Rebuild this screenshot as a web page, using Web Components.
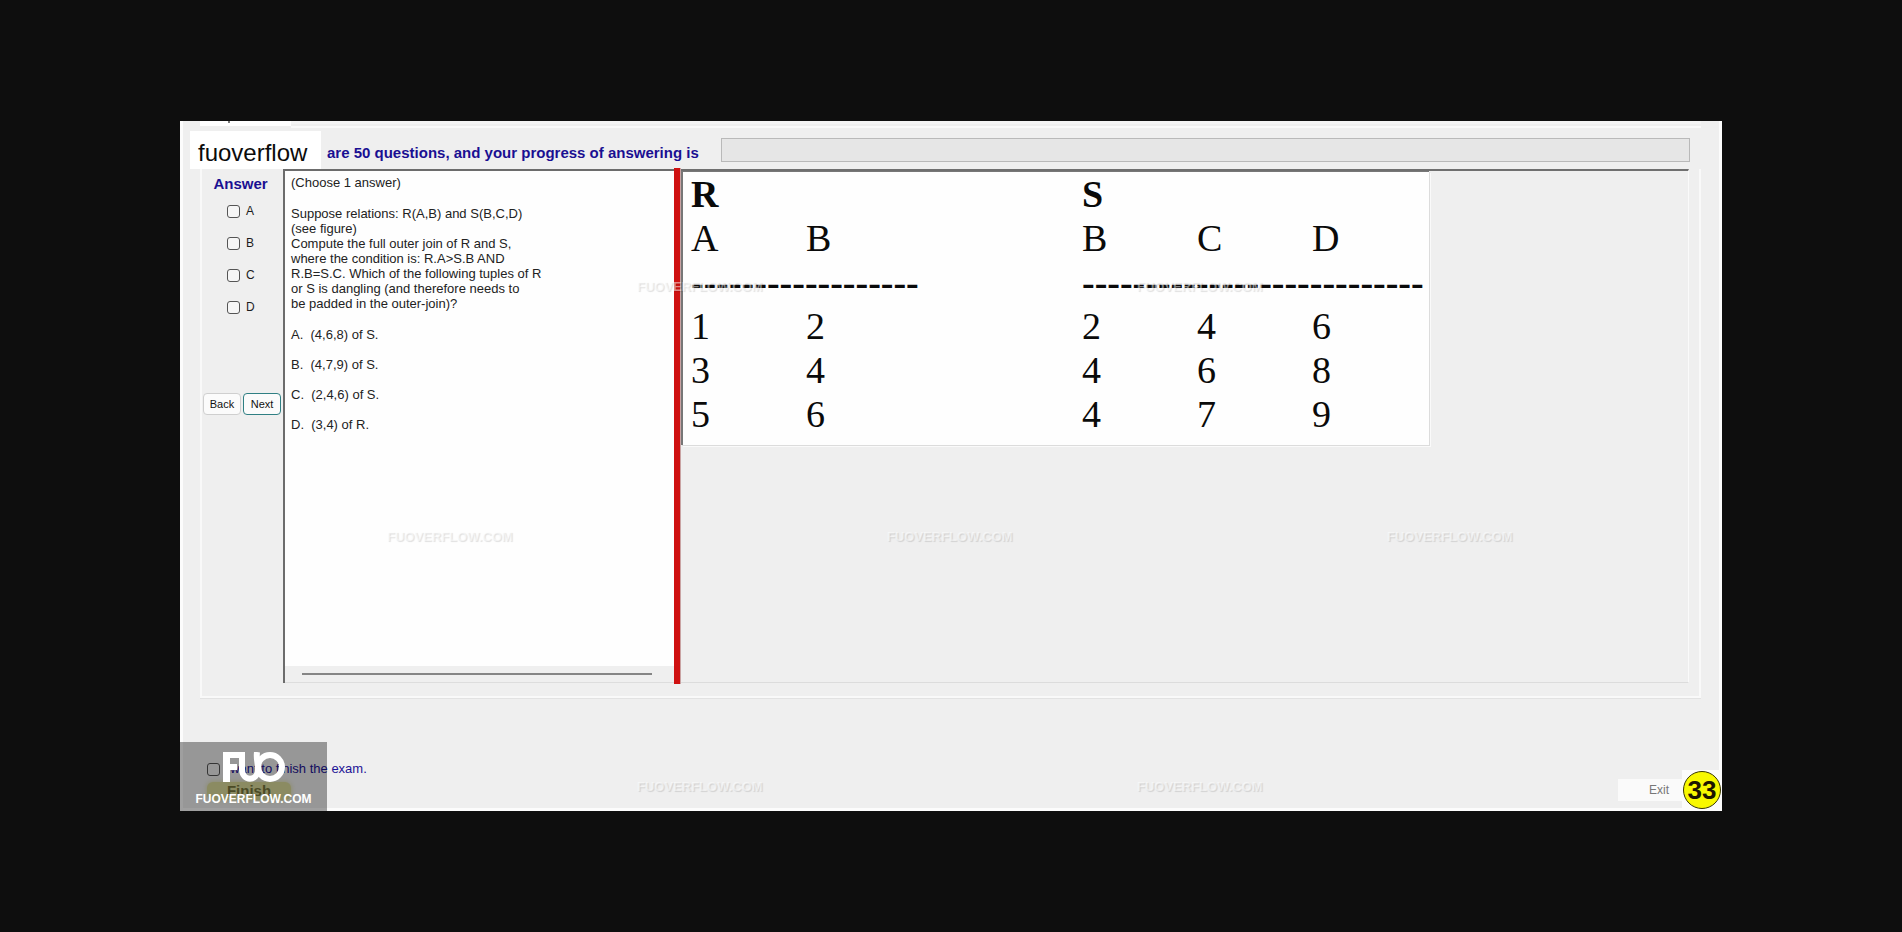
<!DOCTYPE html>
<html lang="en">
<head>
<meta charset="utf-8">
<title>Exam</title>
<style>
html,body{height:100%}
body{margin:0;background:#0e0e0e;font-family:"Liberation Sans",Arial,sans-serif;color:#1c1c1c}
</style>
</head>
<body>
<exam-app></exam-app>
<script>
function define(name, html, setup) {
  const template = document.createElement('template');
  template.innerHTML = html;
  customElements.define(name, class extends HTMLElement {
    constructor() {
      super();
      this.attachShadow({ mode: 'open' }).append(template.content.cloneNode(true));
    }
    connectedCallback() { if (setup) setup(this, this.shadowRoot); }
  });
}

/* Small square tick box with its caption */
define('tick-box', `
<style>
:host{display:block}
label{display:flex;align-items:center;gap:6px;font-size:12px;line-height:16px}
input{appearance:none;flex:none;width:13px;height:13px;margin:0;border:1px solid #555;border-radius:3px;background:#f6f6f6}
input:checked{background:#555}
:host([wide]) label{font-size:13px;gap:3px;color:#1d1396}
:host([wide]) input{background:none}
</style>
<label><input type="checkbox"><slot></slot></label>`);

define('exam-header', `
<style>
:host{display:block}
.strip{display:flex;height:7px;margin:0 21px 0 20px}
.tab{width:91px;height:5px;background:linear-gradient(#777,#777) 28px 0/2px 2px no-repeat #fff}
.line{flex:1;box-sizing:border-box;border-top:3px solid #f4f4f4;border-bottom:2px solid #fafafa}
.row{display:flex;align-items:flex-start;padding:3px 32px 0 10px}
.tag{width:131px;height:38px;box-sizing:border-box;padding:0 8px;background:#fff;color:#0b0b0b;font-size:24px;line-height:44px}
label{padding:12px 22px 0 6px;font-size:15px;line-height:20px;font-weight:700;color:#1a0f92;white-space:nowrap}
.bar{flex:1;height:24px;margin-top:7px;box-sizing:border-box;border:1px solid #b9b9b9;background:#e6e6e6}
</style>
<div class="strip"><div class="tab"></div><div class="line"></div></div>
<div class="row">
  <div class="tag">fuoverflow</div>
  <label id="progress">are 50 questions, and your progress of answering is</label>
  <div class="bar" role="progressbar" aria-labelledby="progress" aria-valuenow="0"></div>
</div>`);

define('answer-pane', `
<style>
:host{display:block;width:81px;text-align:center}
h2{margin:0;padding:5px 4px 9px 0;font-size:15px;line-height:20px;color:#1a0f92}
.choices{display:grid;gap:16px;padding:0 0 0 25px}
.nav{display:flex;gap:2px;padding:78px 0 0 1px}
button{box-sizing:border-box;width:38px;height:22px;padding:0;border:1px solid #cfcfcf;border-radius:4px;background:#fbfbfb;font:11px/18px "Liberation Sans",Arial,sans-serif;color:#111}
.next{border-color:#2f7f83}
</style>
<h2>Answer</h2>
<div class="choices">
  <tick-box>A</tick-box><tick-box>B</tick-box><tick-box>C</tick-box><tick-box>D</tick-box>
</div>
<div class="nav"><button type="button">Back</button><button type="button" class="next">Next</button></div>`);

define('question-pane', `
<style>
:host{display:flex;flex-direction:column;box-sizing:border-box;width:391px;border-left:2px solid #6c6c6c;border-top:2px solid #6c6c6c;background:#fefefe}
.text{flex:1;padding:4px 6px;font-size:13px;line-height:15px;color:#222}
p{margin:0 0 16px}
ol{display:grid;gap:15px;margin:0;padding:0;list-style:none}
.scroll{height:17px;padding:7px 22px 0 17px;box-sizing:border-box;background:#efefef;border-bottom:1px solid #ddd}
.thumb{height:2px;background:#858585}
</style>
<div class="text">
  <p>(Choose 1 answer)</p>
  <p>Suppose relations: R(A,B) and S(B,C,D)<br>(see figure)<br>Compute the full outer join of R and S,<br>where the condition is: R.A&gt;S.B AND<br>R.B=S.C. Which of the following tuples of R<br>or S is dangling (and therefore needs to<br>be padded in the outer-join)?</p>
  <ol><li>A.&nbsp; (4,6,8) of S.</li><li>B.&nbsp; (4,7,9) of S.</li><li>C.&nbsp; (2,4,6) of S.</li><li>D.&nbsp; (3,4) of R.</li></ol>
</div>
<div class="scroll"><div class="thumb"></div></div>`);

/* A relation: name, column heads, dashed rule, rows given as "1 2|3 4" */
define('relation-table', `
<style>
:host{display:block}
table{border-collapse:collapse;table-layout:fixed;font:38px/44px "Liberation Serif","Times New Roman",serif;color:#0a0a0a}
th,td{width:115px;height:44px;padding:0;text-align:left;font-weight:400;white-space:nowrap}
.name,.rule{font-weight:700}
</style>
<table></table>`, (host, root) => {
  const cols = host.getAttribute('columns').split(' ');
  const rows = host.getAttribute('rows').split('|').map(r => r.split(' '));
  root.querySelector('table').innerHTML =
    `<tr><th class="name" colspan="${cols.length}">${host.getAttribute('name')}</th></tr>` +
    `<tr>${cols.map(c => `<th>${c}</th>`).join('')}</tr>` +
    `<tr><td class="rule" colspan="${cols.length}">${'-'.repeat(+host.getAttribute('dashes'))}</td></tr>` +
    rows.map(r => `<tr>${r.map(c => `<td>${c}</td>`).join('')}</tr>`).join('');
});

define('figure-pane', `
<style>
:host{display:block;flex:1;box-sizing:border-box;border-top:2px solid #6f6f6f;border-right:1px solid #fafafa;border-bottom:1px solid #dcdcdc}
.figure{display:flex;box-sizing:border-box;width:748px;height:274px;padding:0 0 0 8px;border:solid #777;border-width:1px 0 0 2px;background:#fefefe;box-shadow:1px 1px #dcdcdc,2px 2px #fafafa}
.r{width:391px}
</style>
<div class="figure">
  <relation-table class="r" name="R" columns="A B" dashes="18" rows="1 2|3 4|5 6"></relation-table>
  <relation-table name="S" columns="B C D" dashes="27" rows="2 4 6|4 6 8|4 7 9"></relation-table>
</div>`);

define('exam-footer', `
<style>
:host{display:flex;justify-content:space-between;align-items:flex-start;padding:0 0 1px}
.finish{padding:20px 0 0 27px}
.finish button{display:block;width:84px;height:18px;margin:5px 0 0;padding:0;border:0;border-radius:6px;background:#dcdc9c;box-shadow:0 0 5px #dcdc9c;font:700 15px/18px "Liberation Sans",Arial,sans-serif;color:#77773c}
.end{display:flex;align-items:center;padding-top:29px}
.exit{width:82px;height:22px;margin-right:-18px;padding:0;border:0;background:#fafafa;font:12px/22px "Liberation Sans",Arial,sans-serif;color:#777}
.timer{display:grid;place-items:center;width:38px;height:38px;padding:1px;background:#fcfcfc;position:relative}
.timer b{box-sizing:border-box;width:38px;height:38px;border:1px solid #3a3800;border-radius:50%;background:#f8f800;font-size:26px;line-height:36px;text-align:center;color:#1d1600}
</style>
<div class="finish"><tick-box wide>I want to finish the exam.</tick-box><button type="button">Finish</button></div>
<div class="end"><button type="button" class="exit">Exit</button><div class="timer"><b>33</b></div></div>`);

/* Site badge in the corner */
define('site-badge', `
<style>
:host{display:grid;justify-items:center;align-content:start;gap:7px;box-sizing:border-box;width:147px;height:69px;padding-top:10px;background:rgba(0,0,0,.37);color:#fff}
.name{font-weight:700;font-size:12px;line-height:20px}
</style>
<svg width="62" height="30" viewBox="0 0 62 30" fill="none" stroke="#fff" stroke-width="6" role="img" aria-label="FUO">
  <rect x="0" y="0" width="7" height="30" fill="#fff" stroke="none"/>
  <rect x="0" y="0" width="16" height="6" fill="#fff" stroke="none"/>
  <rect x="0" y="12" width="14" height="6" fill="#fff" stroke="none"/>
  <path d="M19 0V17C19 30 35 30 35 17C35 10 33 7 34 0"/>
  <circle cx="47" cy="15" r="12"/>
</svg>
<div class="name">FUOVERFLOW.COM</div>`);

/* Faint repeated site name over the whole sheet */
define('water-marks', `
<style>
:host{display:block;font-weight:700;font-size:13px;line-height:16px;color:rgba(255,255,255,.5);text-shadow:1px 1px 1px rgba(0,0,0,.12);pointer-events:none}
.row{display:flex;gap:372px;height:16px;padding:158px 0 0 457px}
.row+.row{padding:234px 0 0 207px}
.row+.row+.row{padding-left:457px}
span{width:128px}
</style>
<div class="row"><span>FUOVERFLOW.COM</span><span>FUOVERFLOW.COM</span></div>
<div class="row"><span>FUOVERFLOW.COM</span><span>FUOVERFLOW.COM</span><span>FUOVERFLOW.COM</span></div>
<div class="row"><span>FUOVERFLOW.COM</span><span>FUOVERFLOW.COM</span></div>`);

define('exam-app', `
<style>
:host{display:flex;flex-direction:column;justify-content:center;box-sizing:border-box;min-height:100%;padding:0 180px}
main{position:relative;background:#efefef;box-shadow:inset 3px 0 #fcfcfc,inset -3px 0 #fcfcfc,inset 0 -3px #fcfcfc}
.group{display:flex;margin:0 21px 0 20px;padding:0 10px 13px 0;border:solid #f9f9f9;border-width:0 2px 2px;box-shadow:0 1px #e2e2e2}
.group>*{min-height:514px}
.split{width:6px;margin:-1px 1px -1px 0;background:#cf1111;box-shadow:1px 0 #c9a3a3}
exam-footer{margin-top:43px}
site-badge{position:absolute;left:0;bottom:0}
water-marks{position:absolute;inset:0}
</style>
<main>
  <exam-header></exam-header>
  <div class="group">
    <answer-pane></answer-pane>
    <question-pane></question-pane>
    <div class="split"></div>
    <figure-pane></figure-pane>
  </div>
  <exam-footer></exam-footer>
  <site-badge></site-badge>
  <water-marks aria-hidden="true"></water-marks>
</main>`);
</script>
</body>
</html>
